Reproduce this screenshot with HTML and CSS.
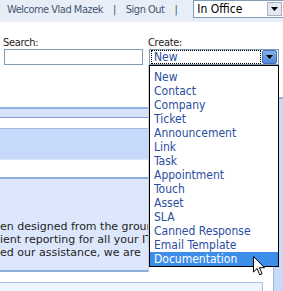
FILE: index.html
```html
<!DOCTYPE html>
<html lang="en">
<head>
    <meta charset="UTF-8">
    <title>Portal</title>
    <link rel="stylesheet" href="styles.css">
</head>
<body>
    <div class="topbar">
        <span>Welcome Vlad Mazek</span>
        <span class="sep">|</span>
        <span>Sign Out</span>
        <span class="sep">|</span>
        <div class="select status">
            <span class="value">In Office</span>
            <span class="arrow"><svg width="7" height="4" viewBox="0 0 7 4"><path d="M0 0h7L3.5 4z" fill="#000"/></svg></span>
        </div>
    </div>

    <div class="fields">
        <div class="field search">
            <label>Search:</label>
            <div class="input"></div>
        </div>
        <div class="field create">
            <label>Create:</label>
            <div class="select create-select">
                <span class="value focus">New</span>
                <span class="arrow blue"><svg width="7" height="4" viewBox="0 0 7 4"><path d="M0 0h7L3.5 4z" fill="#000"/></svg></span>
            </div>
            <ul class="dropdown">
                <li>New</li>
                <li>Contact</li>
                <li>Company</li>
                <li>Ticket</li>
                <li>Announcement</li>
                <li>Link</li>
                <li>Task</li>
                <li>Appointment</li>
                <li>Touch</li>
                <li>Asset</li>
                <li>SLA</li>
                <li>Canned Response</li>
                <li>Email Template</li>
                <li class="active">Documentation</li>
            </ul>
        </div>
    </div>

    <div class="content">
        <div class="left">
            <div class="upper">
                <div class="main">
                    <div class="band band-head"></div>
                    <div class="band band-tabs"></div>
                    <div class="band band-body">
                        <p>en designed from the groun</p>
                        <p>ient reporting for all your IT</p>
                        <p>ed our assistance, we are</p>
                    </div>
                </div>
            </div>
            <div class="lower">
                <div class="box"></div>
            </div>
        </div>
        <div class="side"></div>
    </div>

    <svg class="cursor" width="13" height="20" viewBox="0 0 13 20">
        <path d="M0.5 0.5v15.5l3.6-3.5 2.6 6.3 2.4-1-2.6-6.1h5z" fill="#fff" stroke="#000" stroke-width="1" stroke-linejoin="round"/>
    </svg>
</body>
</html>
```

FILE: styles.css
```css
body {
    margin: 0;
    width: 283px;
    height: 291px;
    overflow: hidden;
    background-color: white;
    font-family: "DejaVu Sans Condensed", "DejaVu Sans", sans-serif;
    font-stretch: condensed;
    font-size: 11px;
    color: #222;
    position: relative;
}

.topbar {
    display: flex;
    align-items: flex-start;
    height: 22px;
    padding-left: 7px;
    background-color: #e8eef8;
    color: #45556f;
    letter-spacing: -0.5px;
    line-height: 20px;
    white-space: nowrap;
}

.topbar > * {
    flex-shrink: 0;
}

.topbar .sep {
    margin: 0 10px;
}

.select {
    display: flex;
    align-items: center;
    background-color: white;
    border: 1px solid #7f9db9;
    box-sizing: border-box;
}

.select .value {
    flex-grow: 1;
}

.select .arrow {
    display: flex;
    align-items: center;
    justify-content: center;
    box-sizing: border-box;
}

.status {
    margin-left: 6px;
    width: 91px;
    height: 18px;
    color: #000;
    font-size: 12px;
    letter-spacing: 0;
    line-height: 16px;
}

.status .value {
    padding-left: 3px;
}

.status .arrow {
    width: 15px;
    height: 14px;
    margin-right: 1px;
    background-color: #e4e8ee;
    border: 1px solid #a8b4c4;
}

.fields {
    display: flex;
    padding: 14px 0 0 3px;
    position: relative;
}

.field label {
    display: block;
    line-height: 13px;
    letter-spacing: -0.3px;
    color: #222;
}

.search {
    width: 145px;
}

.search .input {
    margin-left: 1px;
    width: 139px;
    height: 16px;
    border: 1px solid #7f9db9;
    box-sizing: border-box;
}

.create {
    position: relative;
}

.create-select {
    margin-left: 1px;
    width: 130px;
    height: 16px;
    font-size: 12px;
    color: #2b4ea0;
    padding: 1px;
}

.create-select .focus {
    height: 12px;
    line-height: 12px;
    padding-left: 2px;
    border: 1px dotted #000;
}

.create-select .arrow.blue {
    width: 15px;
    height: 14px;
    margin-left: 1px;
    background: linear-gradient(#86b2ea, #4f88d8);
    border: 1px solid #4172bd;
    border-radius: 2px;
}

.dropdown {
    position: absolute;
    left: 1px;
    top: 29px;
    width: 130px;
    margin: 0;
    padding: 4px 0 0 0;
    list-style: none;
    background-color: white;
    border: 1px solid #000;
    box-sizing: border-box;
    font-size: 12px;
    color: #2b4ea0;
    z-index: 2;
}

.dropdown li {
    height: 14px;
    line-height: 14px;
    padding-left: 4px;
    white-space: nowrap;
}

.dropdown li.active {
    background-color: #3d8ee8;
    color: white;
}

.content {
    display: flex;
}

.left {
    width: 273px;
}

.upper {
    display: flex;
}

.main {
    width: 148px;
    padding-top: 42px;
    border-right: 1px solid #c9ced8;
}

.band-head {
    height: 8px;
    background-color: #d5e2f9;
    border-top: 2px solid #93afe3;
    border-bottom: 1px solid #7f98c4;
}

.band-tabs {
    margin-top: 10px;
    height: 30px;
    background-color: #c6d9fb;
    border-top: 1px solid #a3bbe4;
    border-bottom: 1px solid #dbe6fa;
}

.band-body {
    margin-top: 17px;
    height: 50px;
    padding-top: 41px;
    background-color: #dce7fb;
    border-top: 2px solid #8eabdc;
    border-bottom: 2px solid #8eabdc;
    overflow: hidden;
}

.band-body p {
    margin: 0;
    font-family: "DejaVu Sans", sans-serif;
    font-stretch: normal;
    font-size: 11px;
    line-height: 13px;
    white-space: nowrap;
    color: #1e1e1e;
}

.lower {
    padding-top: 10px;
}

.box {
    width: 262px;
    height: 20px;
    background-color: #eef4fd;
    border-top: 1px solid #a9c0e8;
    border-right: 1px solid #a9c0e8;
}

.side {
    flex-grow: 1;
    margin-top: 32px;
    height: 200px;
    background-color: #c8daf6;
    border-top: 2px solid #8fade0;
    border-left: 1px solid #9cb5e2;
}

.cursor {
    position: absolute;
    left: 253px;
    top: 256px;
    z-index: 3;
}
```
